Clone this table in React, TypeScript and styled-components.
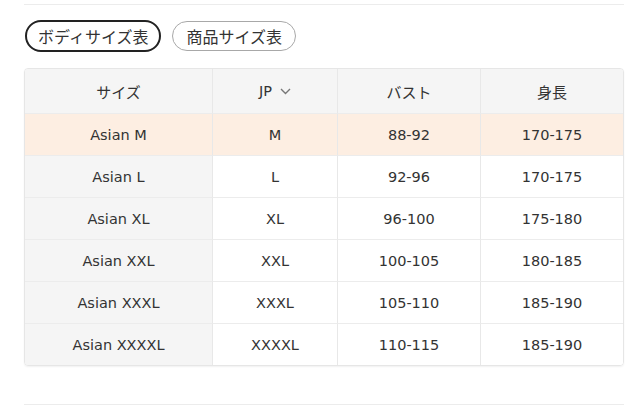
import React from "react";
import styled, { createGlobalStyle } from "styled-components";

const Global = createGlobalStyle`
  html, body { margin: 0; padding: 0; background: #fff; }
  body { font-family: "DejaVu Sans", "Noto Sans CJK JP", sans-serif; color: #333; }
`;

const Page = styled.div`
  width: 600px;
  margin-left: 24px;
  padding-top: 4px;
  display: flex;
  flex-direction: column;
`;

const Rule = styled.div`
  height: 1px;
  background: #ececec;
`;

const Tabs = styled.div`
  display: flex;
  align-items: center;
  gap: 11px;
  margin: 15px 0 16px 1px;
`;

const Tab = styled.button<{ $active?: boolean }>`
  box-sizing: border-box;
  height: ${(p) => (p.$active ? 32 : 30)}px;
  padding: 0 ${(p) => (p.$active ? 11 : 13)}px;
  border-radius: 999px;
  border: ${(p) => (p.$active ? "2px solid #222" : "1px solid #a8a8a8")};
  background: #fff;
  color: #333;
  font-family: "Noto Sans CJK JP", sans-serif;
  font-size: 16px;
  line-height: 1;
  display: flex;
  align-items: center;
  cursor: pointer;
`;

const Table = styled.div`
  border: 1px solid #e6e6e6;
  border-radius: 4px;
  overflow: hidden;
  box-shadow: 0 1px 2px rgba(0, 0, 0, 0.06);
  display: grid;
  grid-template-columns: 188px 125px 143px 1fr;
  margin-bottom: 38px;
`;

const Cell = styled.div<{ $head?: boolean; $first?: boolean; $hi?: boolean; $last?: boolean; $lastRow?: boolean }>`
  height: ${(p) => (p.$head ? 44 : 41)}px;
  display: flex;
  align-items: center;
  justify-content: center;
  gap: 8px;
  font-size: 14.5px;
  color: #333;
  background: ${(p) => (p.$hi ? "#fdeee2" : p.$head || p.$first ? "#f5f5f5" : "#fff")};
  border-right: ${(p) => (p.$last ? "none" : "1px solid #e8e8e8")};
  border-bottom: ${(p) => (p.$lastRow ? "none" : "1px solid #ececec")};
`;

const HeadText = styled.span`
  font-family: "Noto Sans CJK JP", sans-serif;
  font-size: 15px;
`;

const Chevron = () => (
  <svg width="11" height="7" viewBox="0 0 11 7" fill="none">
    <path d="M1 1l4.5 4.5L10 1" stroke="#777" strokeWidth="1.4" />
  </svg>
);

const rows = [
  ["Asian M", "M", "88-92", "170-175"],
  ["Asian L", "L", "92-96", "170-175"],
  ["Asian XL", "XL", "96-100", "175-180"],
  ["Asian XXL", "XXL", "100-105", "180-185"],
  ["Asian XXXL", "XXXL", "105-110", "185-190"],
  ["Asian XXXXL", "XXXXL", "110-115", "185-190"],
];

export default function App() {
  return (
    <>
      <Global />
      <Page>
        <Rule />
        <Tabs>
          <Tab $active>ボディサイズ表</Tab>
          <Tab>商品サイズ表</Tab>
        </Tabs>
        <Table>
          <Cell $head>
            <HeadText>サイズ</HeadText>
          </Cell>
          <Cell $head>
            JP <Chevron />
          </Cell>
          <Cell $head>
            <HeadText>バスト</HeadText>
          </Cell>
          <Cell $head $last>
            <HeadText>身長</HeadText>
          </Cell>
          {rows.map((r, i) =>
            r.map((v, j) => (
              <Cell
                key={`${i}-${j}`}
                $first={j === 0}
                $hi={i === 0}
                $last={j === 3}
                $lastRow={i === rows.length - 1}
              >
                {v}
              </Cell>
            ))
          )}
        </Table>
        <Rule />
      </Page>
    </>
  );
}
